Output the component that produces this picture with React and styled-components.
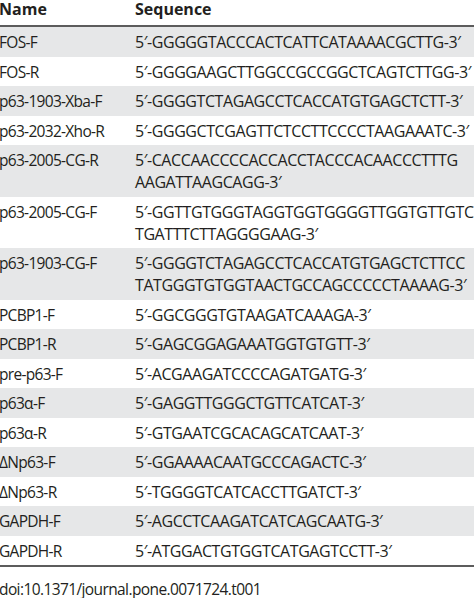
import React from "react";
import styled, { createGlobalStyle } from "styled-components";

const Global = createGlobalStyle`
  html, body { margin: 0; padding: 0; background: #ffffff; }
  body { overflow: hidden; }
`;

const Page = styled.div`
  width: 474px;
  font-family: "Open Sans", "Noto Sans", sans-serif;
  color: #231f20;
  font-size: 16px;
`;

const Row = styled.div`
  display: grid;
  grid-template-columns: 135px 1fr;
  background: ${(p) => (p.$shaded ? "#e6e7e8" : "#ffffff")};
  padding: 4px 0 3.5px;
  line-height: 22px;
  white-space: nowrap;
`;

const HeadRow = styled.div`
  display: grid;
  grid-template-columns: 135px 1fr;
  box-sizing: border-box;
  height: 25px;
  padding-top: 1px;
  line-height: 16px;
  font-weight: 700;
  white-space: nowrap;
`;

const HeadCell = styled.div`
  margin-left: ${(p) => (p.$first ? "-1px" : "0")};
`;

const NameCell = styled.div`
  margin-left: -1px;
  font-size: 15.5px;
  letter-spacing: -0.7px;
`;

const SeqCell = styled.div`
  display: flex;
  flex-direction: column;
  letter-spacing: -0.42px;
`;

const Rule = styled.div`
  height: 2px;
  background: #5c5c5c;
`;

const Doi = styled.div`
  margin-top: 13px;
  line-height: 18px;
  margin-left: -1px;
  font-size: 15.5px;
  letter-spacing: -0.6px;
`;

const rows = [
  ["FOS-F", ["5′-GGGGGTACCCACTCATTCATAAAACGCTTG-3′"]],
  ["FOS-R", ["5′-GGGGAAGCTTGGCCGCCGGCTCAGTCTTGG-3′"]],
  ["p63-1903-Xba-F", ["5′-GGGGTCTAGAGCCTCACCATGTGAGCTCTT-3′"]],
  ["p63-2032-Xho-R", ["5′-GGGGCTCGAGTTCTCCTTCCCCTAAGAAATC-3′"]],
  ["p63-2005-CG-R", ["5′-CACCAACCCCACCACCTACCCACAACCCTTTG", "AAGATTAAGCAGG-3′"]],
  ["p63-2005-CG-F", ["5′-GGTTGTGGGTAGGTGGTGGGGTTGGTGTTGTC", "TGATTTCTTAGGGGAAG-3′"]],
  ["p63-1903-CG-F", ["5′-GGGGTCTAGAGCCTCACCATGTGAGCTCTTCC", "TATGGGTGTGGTAACTGCCAGCCCCCTAAAAG-3′"]],
  ["PCBP1-F", ["5′-GGCGGGTGTAAGATCAAAGA-3′"]],
  ["PCBP1-R", ["5′-GAGCGGAGAAATGGTGTGTT-3′"]],
  ["pre-p63-F", ["5′-ACGAAGATCCCCAGATGATG-3′"]],
  ["p63α-F", ["5′-GAGGTTGGGCTGTTCATCAT-3′"]],
  ["p63α-R", ["5′-GTGAATCGCACAGCATCAAT-3′"]],
  ["ΔNp63-F", ["5′-GGAAAACAATGCCCAGACTC-3′"]],
  ["ΔNp63-R", ["5′-TGGGGTCATCACCTTGATCT-3′"]],
  ["GAPDH-F", ["5′-AGCCTCAAGATCATCAGCAATG-3′"]],
  ["GAPDH-R", ["5′-ATGGACTGTGGTCATGAGTCCTT-3′"]],
];

export default function App() {
  return (
    <Page>
      <Global />
      <HeadRow>
        <HeadCell $first>Name</HeadCell>
        <HeadCell>Sequence</HeadCell>
      </HeadRow>
      <Rule />
      {rows.map(([name, lines], i) => (
        <Row key={name} $shaded={i % 2 === 0}>
          <NameCell>{name}</NameCell>
          <SeqCell>
            {lines.map((l) => (
              <span key={l}>{l}</span>
            ))}
          </SeqCell>
        </Row>
      ))}
      <Rule />
      <Doi>doi:10.1371/journal.pone.0071724.t001</Doi>
    </Page>
  );
}
